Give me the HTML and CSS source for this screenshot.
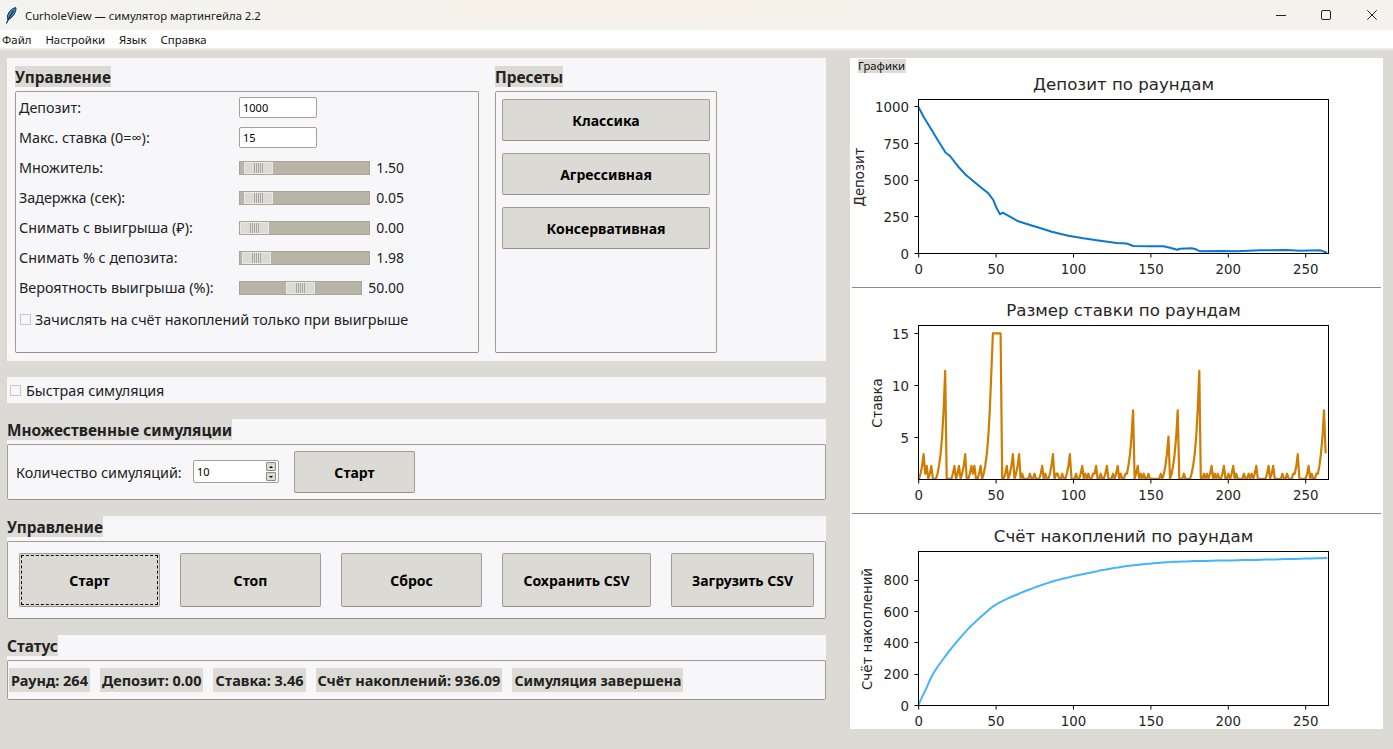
FILE: index.html
```html
<!DOCTYPE html>
<html lang="ru">
<head>
<meta charset="utf-8">
<title>CurholeView — симулятор мартингейла 2.2</title>
<link rel="stylesheet" href="styles.css">
</head>
<body>
<header class="titlebar">
  <svg class="app-icon" width="12" height="17" viewBox="0 0 12 17"><path d="M10.8 .6C7.5 1.2 4.2 4 2.9 7.6 2.2 9.6 2.3 11.6 2.9 12.7 5.6 11.8 8.6 8.8 10 5.6 10.8 3.8 11.2 2 10.8 .6Z" fill="#3f8fd6" stroke="#10253f" stroke-width="1"/><path d="M8.6 3.6C6.2 7 4 11 1.4 16.4" fill="none" stroke="#10253f" stroke-width="1.1"/></svg>
  <span class="title-text">CurholeView — симулятор мартингейла 2.2</span>
  <div class="win-controls">
    <svg width="10" height="10" viewBox="0 0 10 10"><path d="M0 5.5H10" stroke="#222" fill="none"/></svg>
    <svg class="win-max" width="10" height="10" viewBox="0 0 10 10"><rect x=".5" y=".5" width="9" height="9" rx="1.5" stroke="#222" fill="none"/></svg>
    <svg width="10" height="10" viewBox="0 0 10 10"><path d="M.3 .3 9.7 9.7M9.7 .3 .3 9.7" stroke="#222" fill="none"/></svg>
  </div>
</header>
<nav class="menubar"><span>Файл</span><span>Настройки</span><span>Язык</span><span>Справка</span></nav>
<main class="main">
  <div class="left">
    <section class="panel panel-top">
      <div class="group group-params">
        <div class="cap">Управление</div>
        <div class="box box-params">
          <div class="row"><label class="lbl">Депозит:</label><div class="entry">1000</div></div>
          <div class="row"><label class="lbl">Макс. ставка (0=∞):</label><div class="entry">15</div></div>
          <div class="row"><label class="lbl">Множитель:</label><div class="track"><div class="thumb" style="margin-left:4px"></div></div><span class="val">1.50</span></div>
          <div class="row"><label class="lbl">Задержка (сек):</label><div class="track"><div class="thumb" style="margin-left:4px"></div></div><span class="val">0.05</span></div>
          <div class="row"><label class="lbl">Снимать с выигрыша (₽):</label><div class="track"><div class="thumb" style="margin-left:0"></div></div><span class="val">0.00</span></div>
          <div class="row"><label class="lbl">Снимать % с депозита:</label><div class="track"><div class="thumb" style="margin-left:2px"></div></div><span class="val">1.98</span></div>
          <div class="row"><label class="lbl">Вероятность выигрыша (%):</label><div class="track track-short"><div class="thumb" style="margin-left:46px"></div></div><span class="val val-wide">50.00</span></div>
          <div class="check-row"><span class="check"></span><span>Зачислять на счёт накоплений только при выигрыше</span></div>
        </div>
      </div>
      <div class="group group-presets">
        <div class="cap">Пресеты</div>
        <div class="box box-presets">
          <button class="btn btn-preset">Классика</button>
          <button class="btn btn-preset">Агрессивная</button>
          <button class="btn btn-preset">Консервативная</button>
        </div>
      </div>
    </section>
    <section class="panel panel-fast"><span class="check"></span><span>Быстрая симуляция</span></section>
    <section class="panel">
      <div class="cap">Множественные симуляции</div>
      <div class="box box-multi">
        <span class="multi-lbl">Количество симуляций:</span>
        <div class="spin"><span class="spin-text">10</span><div class="spin-btns"><span class="spin-up"></span><span class="spin-down"></span></div></div>
        <button class="btn btn-multi">Старт</button>
      </div>
    </section>
    <section class="panel">
      <div class="cap">Управление</div>
      <div class="box box-actions">
        <button class="btn btn-act btn-focus">Старт</button>
        <button class="btn btn-act">Стоп</button>
        <button class="btn btn-act">Сброс</button>
        <button class="btn btn-act btn-save">Сохранить CSV</button>
        <button class="btn btn-act btn-load">Загрузить CSV</button>
      </div>
    </section>
    <section class="panel">
      <div class="cap">Статус</div>
      <div class="box box-status">
        <span class="stat">Раунд: 264</span>
        <span class="stat">Депозит: 0.00</span>
        <span class="stat">Ставка: 3.46</span>
        <span class="stat">Счёт накоплений: 936.09</span>
        <span class="stat">Симуляция завершена</span>
      </div>
    </section>
  </div>
  <aside class="right">
    <div class="tab-label">Графики</div>
    <svg class="chart chart-a" width="533" height="214" viewBox="850 73 533 214">
      <defs><clipPath id="clip-a"><rect x="918.5" y="99.5" width="410" height="154"/></clipPath></defs>
      <polyline class="line line-dep" clip-path="url(#clip-a)" points="918.3,106.7 924,117.5 931.7,130 938.3,141 945.7,152.7 950,156 958.3,166.7 966,175 974,181.7 981.7,188 988.3,193.3 993.3,200 996.7,208.3 1000,214.3 1002.7,212.7 1010,216.7 1018.3,221.3 1030,225 1040,228 1051.7,231.7 1068.3,235.7 1083.3,238.3 1096.7,240.3 1116.7,243 1126.7,243.5 1133.3,246 1150,246.3 1163.3,246.3 1170,247.7 1177.3,249.7 1180,248.7 1191.7,248.3 1196,249.3 1200,251.3 1220,251 1236.7,251.3 1260,250.3 1286.7,250 1300,250.7 1320,250.3 1325,252 1327,253"/>
      <rect class="frame" x="918.5" y="99.5" width="410" height="154"/>
      <path class="ticks" d="M918.7 253.5v4M996.1 253.5v4M1073.5 253.5v4M1150.9 253.5v4M1228.3 253.5v4M1305.7 253.5v4M918.5 253.5h-4M918.5 216.5h-4M918.5 180.5h-4M918.5 143.5h-4M918.5 106.5h-4"/>
      <text class="tk-y" x="909" y="258.5">0</text><text class="tk-y" x="909" y="221.5">250</text><text class="tk-y" x="909" y="185">500</text><text class="tk-y" x="909" y="148.5">750</text><text class="tk-y" x="909" y="111.5">1000</text>
      <text class="tk-x" x="918.7" y="274">0</text><text class="tk-x" x="996.1" y="274">50</text><text class="tk-x" x="1073.5" y="274">100</text><text class="tk-x" x="1150.9" y="274">150</text><text class="tk-x" x="1228.3" y="274">200</text><text class="tk-x" x="1305.7" y="274">250</text>
      <text class="ttl" x="1123.5" y="90">Депозит по раундам</text>
      <text class="yl" transform="translate(864 177) rotate(-90)">Депозит</text>
    </svg>
    <div class="divider"></div>
    <svg class="chart chart-b" width="533" height="225" viewBox="850 288 533 225">
      <defs><clipPath id="clip-b"><rect x="918.5" y="325.5" width="410" height="154"/></clipPath></defs>
      <polyline id="bets" class="line line-bet" clip-path="url(#clip-b)" points=""/>
      <rect class="frame" x="918.5" y="325.5" width="410" height="154"/>
      <path class="ticks" d="M918.7 479.5v4M996.1 479.5v4M1073.5 479.5v4M1150.9 479.5v4M1228.3 479.5v4M1305.7 479.5v4M918.5 437.5h-4M918.5 385.5h-4M918.5 333.5h-4"/>
      <text class="tk-y" x="909" y="442.5">5</text><text class="tk-y" x="909" y="390.5">10</text><text class="tk-y" x="909" y="338.5">15</text>
      <text class="tk-x" x="918.7" y="500">0</text><text class="tk-x" x="996.1" y="500">50</text><text class="tk-x" x="1073.5" y="500">100</text><text class="tk-x" x="1150.9" y="500">150</text><text class="tk-x" x="1228.3" y="500">200</text><text class="tk-x" x="1305.7" y="500">250</text>
      <text class="ttl" x="1123.5" y="316">Размер ставки по раундам</text>
      <text class="yl" transform="translate(882 403) rotate(-90)">Ставка</text>
    </svg>
    <div class="divider"></div>
    <svg class="chart chart-c" width="533" height="215" viewBox="850 514 533 215">
      <defs><clipPath id="clip-c"><rect x="918.5" y="551.5" width="410" height="154"/></clipPath></defs>
      <polyline id="savings" class="line line-sav" clip-path="url(#clip-c)" points="918.3,705 926,689 933,674 944,658 956,642.7 970,627 986.7,611.7 996,604.5 1010,597.5 1030,589.3 1050,582.3 1070,577 1090,572.7 1110,568.7 1133.3,565.3 1166.7,562.3 1200,561 1250,560 1290,559 1327.3,558"/>
      <rect class="frame" x="918.5" y="551.5" width="410" height="154"/>
      <path class="ticks" d="M918.7 705.5v4M996.1 705.5v4M1073.5 705.5v4M1150.9 705.5v4M1228.3 705.5v4M1305.7 705.5v4M918.5 705.5h-4M918.5 674.5h-4M918.5 642.5h-4M918.5 611.5h-4M918.5 580.5h-4"/>
      <text class="tk-y" x="909" y="710.5">0</text><text class="tk-y" x="909" y="679">200</text><text class="tk-y" x="909" y="647.5">400</text><text class="tk-y" x="909" y="616.5">600</text><text class="tk-y" x="909" y="585">800</text>
      <text class="tk-x" x="918.7" y="726">0</text><text class="tk-x" x="996.1" y="726">50</text><text class="tk-x" x="1073.5" y="726">100</text><text class="tk-x" x="1150.9" y="726">150</text><text class="tk-x" x="1228.3" y="726">200</text><text class="tk-x" x="1305.7" y="726">250</text>
      <text class="ttl" x="1123.5" y="542">Счёт накоплений по раундам</text>
      <text class="yl" transform="translate(872 629) rotate(-90)">Счёт накоплений</text>
    </svg>
  </aside>
</main>
<script src="charts.js"></script>
</body>
</html>
```
FILE: styles.css
```css
* { box-sizing: border-box; }
html, body { margin: 0; height: 100%; }
body {
  width: 1393px; height: 749px; overflow: hidden;
  background: #dcdad5; color: #222;
  font-family: "Noto Sans", "Open Sans", sans-serif; font-size: 14.35px;
}
.titlebar {
  height: 30px; display: flex; align-items: center; position: relative;
  background: linear-gradient(90deg, #f3f3f1, #f6f2e9 40%, #f3f2ed);
  font-size: 11.3px; color: #1a1a1a;
}
.app-icon { margin-left: 5px; width: 12px; height: 17px; }
.title-text { margin-left: 8px; }
.win-controls { margin-left: auto; display: flex; gap: 35px; margin-right: 16px; }
.win-controls svg { display: block; margin-top: -1px; }
.win-controls .win-max { margin-right: 1px; }
.menubar {
  height: 20px; background: #fff; border-bottom: 2px solid #ececea;
  display: flex; gap: 14px; padding-left: 2px; font-size: 11.4px; line-height: 19px; color: #111;
}
.main { display: flex; padding: 8px 10px 20px 7px; gap: 24px; height: 699px; }
.left { width: 819px; display: flex; flex-direction: column; gap: 16px; }
.panel { background: #f7f7fa; }
.panel-top { display: flex; gap: 16px; padding: 8px; height: 303px; }
.group-params { width: 464px; }
.group-presets { width: 222px; }
.cap {
  width: fit-content; height: 21px; line-height: 23px; background: #dcdad5;
  font-weight: 700; font-size: 15.4px; color: #222; margin-bottom: 4px;
}
.box { border: 1px solid #a19d93; border-bottom-color: #96928a; border-radius: 2px; }
.box-params { height: 262px; padding: 1px 0 0 3px; }
.row { height: 30px; display: flex; align-items: center; }
.lbl { width: 220px; flex: none; margin-bottom: 2px; }
.entry {
  width: 78px; height: 21px; background: #fff; border: 1px solid #a5a095; border-radius: 2px;
  font-size: 11px; line-height: 19px; padding-left: 3px; color: #000; margin-bottom: 1px;
}
.track {
  width: 131px; height: 14px; background: #b8b4a8; border: 1px solid #a9a598; display: flex; flex: none;
}
.track-short { width: 123px; }
.thumb {
  width: 29px; height: 12px; border: 1px solid #e9e8e4;
  background:
    repeating-linear-gradient(90deg, #a9a69d 0 1px, #e0ded9 1px 2px) center / 10px 100% no-repeat,
    #dcdad5;
}
.val { width: 34px; text-align: right; flex: none; margin-bottom: 2px; font-size: 14px; }
.val-wide { width: 42px; }
.check-row { display: flex; align-items: center; height: 34px; gap: 4px; padding: 0 0 2px 1px; }
.check { width: 11px; height: 11px; border: 1px solid #c8c6c0; background: #f7f7fa; flex: none; }
.box-presets { height: 262px; padding: 7px 6px; display: flex; flex-direction: column; gap: 12px; }
.btn {
  background: #dcdad5; border: 1px solid #a19d93; border-bottom-color: #96928a; border-radius: 2px;
  font-family: inherit; font-size: 14px; font-weight: 700; color: #000; padding: 0;
}
.btn-preset { height: 42px; width: 208px; }
.panel-fast { height: 26px; display: flex; align-items: center; gap: 5px; padding-left: 3px; }
.box-multi { height: 56px; display: flex; align-items: center; padding-left: 8px; }
.multi-lbl { width: 177px; flex: none; }
.spin {
  width: 86px; height: 23px; background: #fff; border: 1px solid #a5a095; border-radius: 2px;
  display: flex; align-items: center; justify-content: space-between; padding: 0 1px 0 3px;
  font-size: 11px; color: #000; margin-bottom: 1px;
}
.spin-btns { display: flex; flex-direction: column; gap: 1px; margin-right: 1px; }
.spin-up, .spin-down {
  width: 10px; height: 9px; background: #dcdad5; border: 1px solid #8f8b82; border-radius: 1px;
  display: flex; align-items: center; justify-content: center;
}
.spin-up::after { content: ""; border: 2px solid transparent; border-bottom-color: #000; border-top: 0; }
.spin-down::after { content: ""; border: 2px solid transparent; border-top-color: #000; border-bottom: 0; }
.btn-multi { width: 121px; height: 42px; margin-left: 15px; }
.box-actions { height: 78px; display: flex; align-items: center; gap: 20px; padding-left: 11px; }
.btn-act { width: 141px; height: 54px; }
.btn-save { width: 149px; }
.btn-load { width: 143px; }
.btn-focus { outline: 1px dashed #000; outline-offset: -3px; }
.box-status { height: 40px; display: flex; align-items: center; gap: 10px; padding-left: 1px; }
.stat { background: #dcdad5; height: 24px; line-height: 25px; padding: 0 2px; font-weight: 700; font-size: 14.5px; color: #222; }
.stat:last-child { font-size: 14.15px; }
.right { width: 533px; background: #fff; display: flex; flex-direction: column; padding-top: 1px; }
.tab-label {
  align-self: flex-start; margin-left: 8px; height: 14px; line-height: 14px;
  background: #dcdad5; font-size: 11.3px; color: #111; padding: 0 1px 0 0;
}
.chart { display: block; flex: none; }
.divider { height: 1px; background: #8a8a8a; margin: 0 2px; flex: none; }
.line { fill: none; stroke-width: 2; stroke-linejoin: round; }
.line-dep { stroke: #0a78d0; }
.line-bet { stroke: #cf7c00; stroke-width: 2.2; }
.line-sav { stroke: #42b5fb; }
.frame { fill: none; stroke: #000; stroke-width: 1; }
.ticks { fill: none; stroke: #000; stroke-width: 1; }
.chart text { font-family: "DejaVu Sans", sans-serif; fill: #262626; }
.tk-y { font-size: 13.33px; text-anchor: end; }
.tk-x { font-size: 13.33px; text-anchor: middle; }
.ttl { font-size: 16.64px; text-anchor: middle; }
.yl { font-size: 13.33px; text-anchor: middle; }
```
FILE: charts.js
```js
// Rebuilds the bet series: a flat bet of 1 with loss streaks that multiply it by 1.5.
var peaks = [[3,3],[5,2],[8,2],[17,6],[23,2],[26,2],[30,3],[34,2],[36,2],[40,2],
  [57,2],[61,3],[65,3],[67,1],[72,1],[75,1],[80,2],[82,1],[87,3],[89,1],[90,1],[93,1],[98,3],
  [102,1],[106,2],[108,1],[110,1],[113,1],[115,2],[118,1],[122,2],[126,1],[129,2],[131,1],[134,1],
  [139,5],[142,2],[144,1],[146,1],[149,1],[157,1],[162,4],[168,5],[172,1],[182,6],[185,1],[187,1],
  [190,2],[192,1],[194,1],[198,2],[201,1],[204,2],[206,1],[211,1],[214,1],[216,1],[219,2],[227,2],
  [230,2],[236,1],[239,1],[243,1],[246,3],[253,2],[255,1],[258,1],[263,5]];
var bets = [];
for (var r = 0; r <= 264; r++) bets.push(1);
peaks.forEach(function (p) {
  for (var k = p[1], i = p[0]; k > 0 && i >= 0; k--, i--) bets[i] = Math.pow(1.5, k);
});
for (var j = 48; j <= 53; j++) bets[j] = 15;
for (var m = 42, l = 1; m < 48; m++, l++) bets[m] = Math.pow(1.5, l);
bets[264] = 3.46;
document.getElementById("bets").setAttribute("points", bets.map(function (v, i) {
  return (919 + i * 1.54).toFixed(1) + "," + (437.3 - (v - 5) * 10.4).toFixed(1);
}).join(" "));

// The savings curve is a smooth one: subdivide its sampled points (Catmull-Rom).
var savings = document.getElementById("savings");
var pts = savings.getAttribute("points").split(" ").map(function (s) { return s.split(",").map(Number); });
var dense = [];
for (var a = 0; a < pts.length - 1; a++) {
  var p0 = pts[Math.max(a - 1, 0)], p1 = pts[a], p2 = pts[a + 1], p3 = pts[Math.min(a + 2, pts.length - 1)];
  for (var s = 0; s < 8; s++) {
    var t = s / 8;
    dense.push([0, 1].map(function (c) {
      return (0.5 * (2 * p1[c] + (p2[c] - p0[c]) * t + (2 * p0[c] - 5 * p1[c] + 4 * p2[c] - p3[c]) * t * t +
        (3 * p1[c] - p0[c] - 3 * p2[c] + p3[c]) * t * t * t)).toFixed(1);
    }).join(","));
  }
}
dense.push(pts[pts.length - 1].join(","));
savings.setAttribute("points", dense.join(" "));
```
